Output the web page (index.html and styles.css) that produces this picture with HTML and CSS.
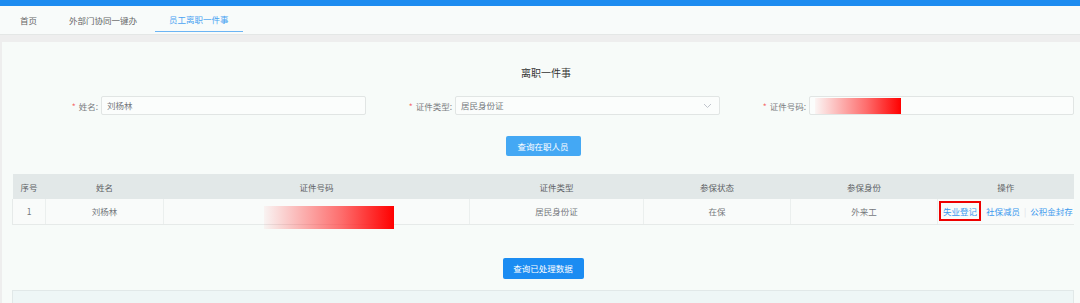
FILE: index.html
```html
<!DOCTYPE html>
<html lang="zh-CN">
<head>
  <meta charset="UTF-8" />
  <title>离职一件事</title>
  <link rel="stylesheet" href="styles.css">
</head>
<body>
  <div class="topbar"></div>
  <div class="nav">
    <div class="tab">首页</div>
    <div class="tab">外部门协同一键办</div>
    <div class="tab active">员工离职一件事</div>
  </div>

  <div class="main">
    <div class="panel">
      <h1 class="title">离职一件事</h1>

      <div class="form-row">
        <div class="form-item">
          <label><span class="req">*</span>姓名:</label>
          <div class="input">刘杨林</div>
        </div>
        <div class="form-item">
          <label><span class="req">*</span>证件类型:</label>
          <div class="input select">
            居民身份证
            <svg class="chevron" width="9" height="6" viewBox="0 0 9 6"><polyline points="1,1 4.5,4.5 8,1" fill="none" stroke="#c0c4cc" stroke-width="1"/></svg>
          </div>
        </div>
        <div class="form-item">
          <label><span class="req">*</span>证件号码:</label>
          <div class="input"><span class="mask mask-input"></span></div>
        </div>
      </div>

      <div class="actions">
        <button class="btn btn-light">查询在职人员</button>
      </div>

      <table class="grid">
        <thead>
          <tr>
            <th class="c-no">序号</th>
            <th class="c-name">姓名</th>
            <th class="c-id">证件号码</th>
            <th class="c-type">证件类型</th>
            <th class="c-state">参保状态</th>
            <th class="c-role">参保身份</th>
            <th class="c-op">操作</th>
          </tr>
        </thead>
        <tbody>
          <tr>
            <td>1</td>
            <td>刘杨林</td>
            <td><span class="mask mask-cell"></span></td>
            <td>居民身份证</td>
            <td>在保</td>
            <td>外来工</td>
            <td class="ops">
              <a class="link boxed">失业登记</a><a class="link">社保减员</a><span class="sep">|</span><a class="link">公积金封存</a>
            </td>
          </tr>
        </tbody>
      </table>

      <div class="actions actions-bottom">
        <button class="btn btn-primary">查询已处理数据</button>
      </div>

      <div class="result"></div>
    </div>
  </div>
</body>
</html>
```

FILE: styles.css
```css
* {
  box-sizing: border-box;
  margin: 0;
  padding: 0;
}

html, body {
  height: 303px;
  overflow: hidden;
}

body {
  font-family: "Noto Sans CJK SC", "Noto Sans", sans-serif;
  font-size: 8.5px;
  color: #707377;
  background: #eeeeee;
}

.topbar {
  height: 6px;
  background: #1e8cf0;
}

.nav {
  height: 29px;
  background: #f8fbfa;
  border-bottom: 1px solid #e4e7e6;
  display: flex;
  gap: 4px;
  padding-left: 6px;
}

.tab {
  padding: 0 14px;
  line-height: 28px;
  color: #666;
  font-size: 8.5px;
}

.tab.active {
  color: #4aa3f2;
  border-bottom: 1px solid #6cb5f4;
  height: 26px;
  line-height: 27px;
}

.main {
  padding: 7px 0 0 2px;
  height: 268px;
  overflow: hidden;
}

.panel {
  background: #f7fbf9;
  padding: 0 6px 0 10px;
  height: 261px;
  overflow: hidden;
}

.title {
  font-size: 10px;
  font-weight: normal;
  color: #333;
  text-align: center;
  line-height: 14px;
  padding-top: 24px;
  margin-left: 6px;
}

.form-row {
  display: grid;
  grid-template-columns: repeat(3, 1fr);
  margin-top: 16px;
}

.form-item {
  display: flex;
  align-items: center;
  gap: 3px;
}

.form-item label {
  width: 86px;
  text-align: right;
  color: #7a7d82;
  font-size: 8.5px;
}

.req {
  color: #f56c6c;
  margin-right: 3px;
}

.input {
  flex: 1;
  height: 19px;
  background: #fbfdfc;
  border: 1px solid #e1e5e4;
  border-radius: 2px;
  padding: 0 5px;
  line-height: 17px;
  position: relative;
  color: #75787c;
}

.select .chevron {
  position: absolute;
  right: 7px;
  top: 6px;
}

.mask {
  display: inline-block;
  background: linear-gradient(to right, rgba(255, 0, 0, 0.03), rgba(255, 60, 60, 0.75) 60%, #ff0000);
}

.mask-input {
  width: 86px;
  height: 16px;
  vertical-align: top;
  margin-top: 1px;
}

.actions {
  display: flex;
  justify-content: center;
  margin-top: 21px;
}

.btn {
  font-family: inherit;
  font-size: 8.5px;
  color: #fff;
  border: none;
  border-radius: 2px;
  height: 20px;
  padding: 0;
  white-space: nowrap;
}

.btn-light {
  background: #44a8f4;
  width: 75px;
}

.btn-primary {
  background: #1b8cf2;
  width: 81px;
  height: 21px;
}

.actions-bottom {
  margin-top: 33px;
}

.grid {
  width: 100%;
  margin-top: 18px;
  border-collapse: collapse;
  table-layout: fixed;
  text-align: center;
  font-size: 8.5px;
}

.grid th {
  background: #e2e8e8;
  font-weight: normal;
  color: #606266;
  height: 25px;
}

.grid td {
  background: #f9fbfa;
  height: 25px;
  border-left: 1px solid #ebefee;
  border-bottom: 1px solid #e6eae9;
  color: #75787c;
  padding: 0;
  white-space: nowrap;
}

.grid td:first-child {
  border-left: 1px solid #e6eae9;
}

.c-no { width: 33px; }
.c-name { width: 118px; }
.c-id { width: 306px; }
.c-type { width: 174px; }
.c-state { width: 147px; }
.c-role { width: 147px; }

.mask-cell {
  width: 130px;
  height: 23px;
  margin-left: 24px;
  position: relative;
  top: 6px;
  vertical-align: middle;
}

.grid td.ops {
  text-align: left;
  padding-left: 1px;
  overflow: visible;
}

.link {
  color: #3a98ee;
  text-decoration: none;
}

.boxed {
  display: inline-block;
  border: 2.5px solid #ee0000;
  padding: 0 2px;
  line-height: 16px;
  margin-right: 5px;
}

.sep {
  color: #dcdfe6;
  margin: 0 4px;
}

.result {
  margin-top: 11px;
  height: 30px;
  background: #eef6f6;
  border: 1px solid #e1e8e8;
}
```
